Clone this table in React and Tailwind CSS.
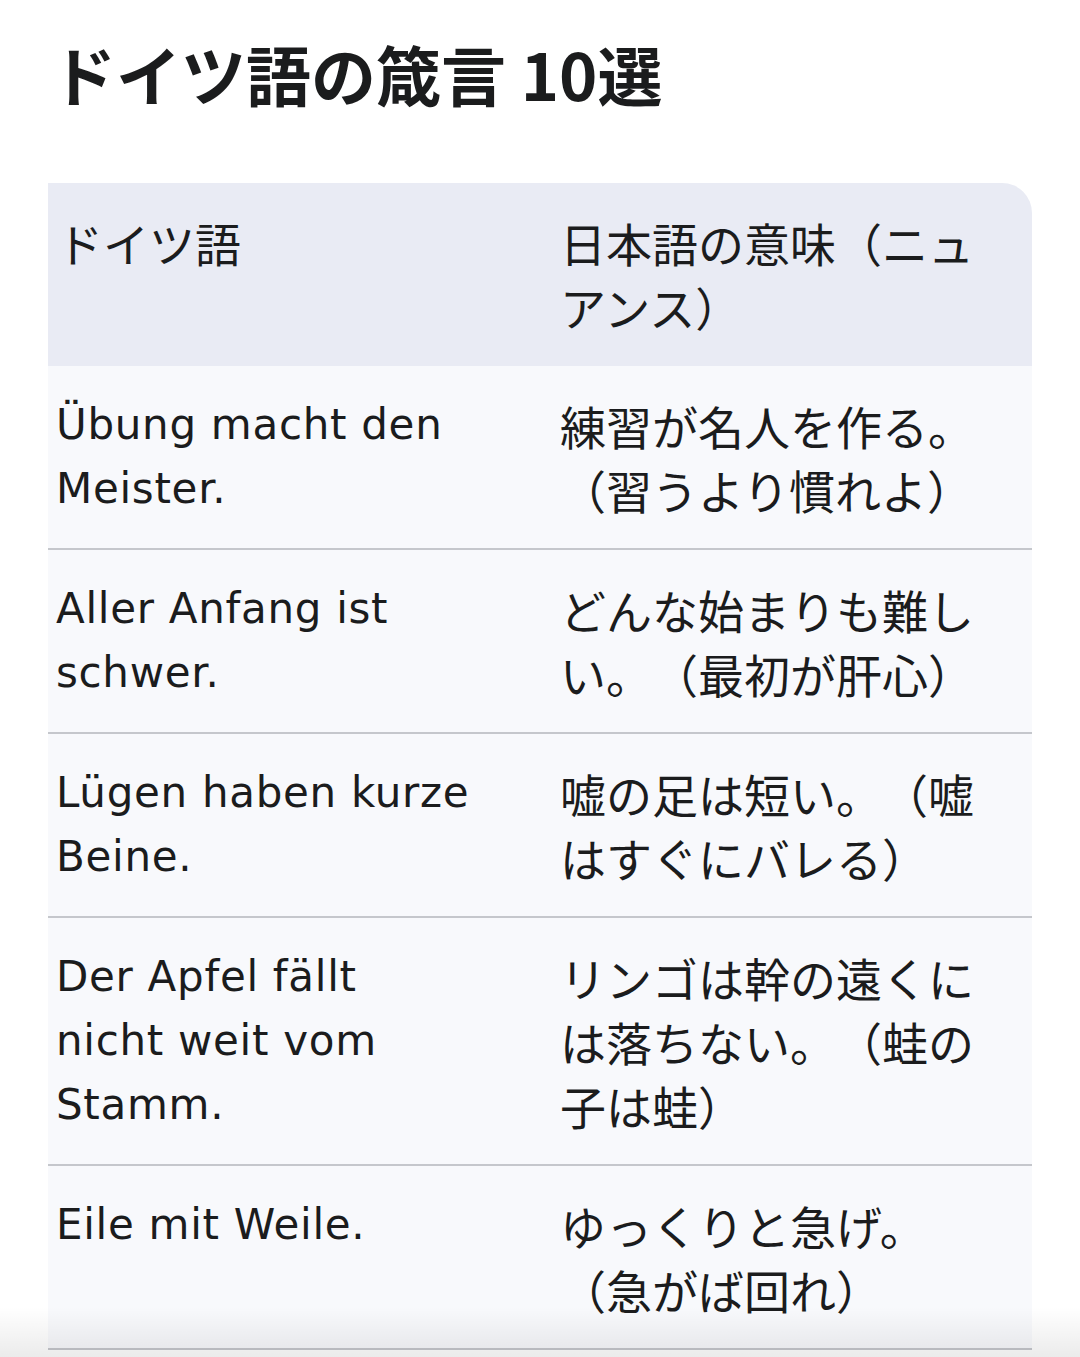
export default function App() {
  const rows = [
    { de: ["Übung macht den", "Meister."], ja: ["練習が名人を作る。", "（習うより慣れよ）"] },
    { de: ["Aller Anfang ist", "schwer."], ja: ["どんな始まりも難し", "い。（最初が肝心）"] },
    { de: ["Lügen haben kurze", "Beine."], ja: ["嘘の足は短い。（嘘", "はすぐにバレる）"] },
    { de: ["Der Apfel fällt", "nicht weit vom", "Stamm."], ja: ["リンゴは幹の遠くに", "は落ちない。（蛙の", "子は蛙）"] },
    { de: ["Eile mit Weile."], ja: ["ゆっくりと急げ。", "（急がば回れ）"] },
  ];
  const jp = { fontFamily: '"Noto Sans CJK JP", "Noto Sans", sans-serif' };
  const de = { fontFamily: '"DejaVu Sans", "Noto Sans CJK JP", sans-serif' };
  return (
    <div className="relative bg-white min-h-[1357px] overflow-hidden text-[#1b1c1d]">
      <h1
        className="pl-[51px] pt-[33px] text-[65px] leading-[80px] font-bold"
        style={jp}
      >
        ドイツ語の箴言 10選
      </h1>
      <div className="mt-[70px] ml-[48px] w-[984px] rounded-tr-[30px] overflow-hidden">
        <div
          className="grid grid-cols-[505px_479px] bg-[#e9ebf4] pt-[27px] pb-[28px] text-[46px] leading-[64px] [text-spacing-trim:space-all]"
          style={jp}
        >
          <div className="pl-[9px]">ドイツ語</div>
          <div className="pl-[7px]">
            日本語の意味（ニュ
            <br />
            アンス）
          </div>
        </div>
        {rows.map((r, i) => (
          <div
            key={i}
            className="grid grid-cols-[505px_479px] bg-[#f8f9fc] py-[27px] border-b-2 border-[#c5c7cc]"
          >
            <div className="pl-[8px] text-[42px] leading-[64px] tracking-[0.7px]" style={de}>
              {r.de.map((l, j) => (
                <div key={j} className="whitespace-nowrap">{l}</div>
              ))}
            </div>
            <div className="pl-[7px] text-[46px] leading-[64px] [text-spacing-trim:space-all]" style={jp}>
              {r.ja.map((l, j) => (
                <div key={j} className="whitespace-nowrap">{l}</div>
              ))}
            </div>
          </div>
        ))}
      </div>
      <div className="pointer-events-none absolute left-0 right-0 bottom-0 h-[50px] bg-gradient-to-b from-transparent to-[rgba(0,0,0,0.08)]" />
    </div>
  );
}
